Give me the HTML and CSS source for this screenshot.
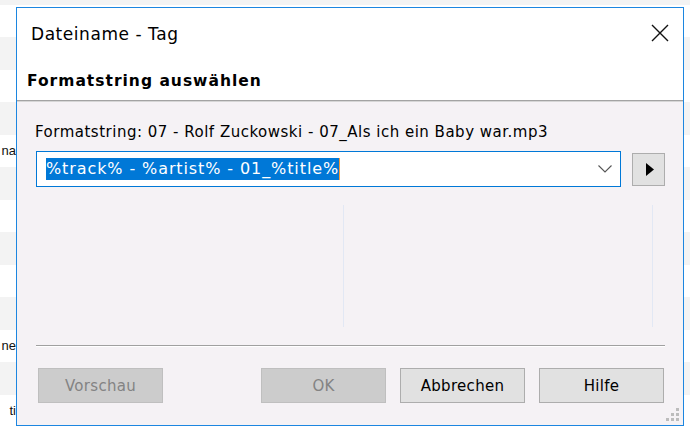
FILE: index.html
```html
<!DOCTYPE html>
<html lang="de">
<head>
    <meta charset="UTF-8">
    <meta name="viewport" content="width=device-width, initial-scale=1.0">
    <title>Dateiname - Tag</title>
    <link rel="stylesheet" href="styles.css">
</head>
<body>
    <!-- list of the main window, mostly hidden behind the dialog -->
    <div class="backdrop">
        <div class="row gray"></div>
        <div class="row"></div>
        <div class="row gray"></div>
        <div class="row"></div>
        <div class="row gray"></div>
        <div class="row"><span class="cell">na</span></div>
        <div class="row gray"></div>
        <div class="row"></div>
        <div class="row gray"></div>
        <div class="row"></div>
        <div class="row gray"></div>
        <div class="row"><span class="cell">ne</span></div>
        <div class="row gray"></div>
        <div class="row"><span class="cell">ti</span></div>
    </div>

    <div class="dialog">
        <div class="titlebar">
            <span class="title">Dateiname - Tag</span>
            <svg class="close" width="18" height="18" viewBox="0 0 18 18">
                <path d="M1 1 L17 17 M17 1 L1 17" stroke="#111" stroke-width="1.4" fill="none"/>
            </svg>
        </div>
        <div class="header">Formatstring auswählen</div>

        <div class="content">
            <div class="label">Formatstring: 07 - Rolf Zuckowski - 07_Als ich ein Baby war.mp3</div>

            <div class="combo-row">
                <div class="combo">
                    <span class="selection">%track% - %artist% - 01_%title%</span>
                    <span class="caret"></span>
                    <svg class="chevron" width="14" height="8" viewBox="0 0 14 8">
                        <path d="M0.5 0.5 L7 7 L13.5 0.5" stroke="#555" stroke-width="1.1" fill="none"/>
                    </svg>
                </div>
                <button class="arrow-btn">
                    <svg width="8" height="13" viewBox="0 0 8 13">
                        <path d="M0 0 L8 6.5 L0 13 Z" fill="#000"/>
                    </svg>
                </button>
            </div>

            <div class="preview">
                <div class="preview-box"></div>
            </div>

            <div class="separator"></div>

            <div class="buttons">
                <button class="btn first" disabled>Vorschau</button>
                <div class="btn-group">
                    <button class="btn" disabled>OK</button>
                    <button class="btn">Abbrechen</button>
                    <button class="btn">Hilfe</button>
                </div>
            </div>
        </div>

        <svg class="grip" width="14" height="14" viewBox="0 0 14 14">
            <rect x="10" y="0" width="3" height="3" fill="#bcbcbc"/>
            <rect x="5" y="5" width="3" height="3" fill="#bcbcbc"/>
            <rect x="10" y="5" width="3" height="3" fill="#bcbcbc"/>
            <rect x="0" y="10" width="3" height="3" fill="#bcbcbc"/>
            <rect x="5" y="10" width="3" height="3" fill="#bcbcbc"/>
            <rect x="10" y="10" width="3" height="3" fill="#bcbcbc"/>
        </svg>
    </div>
</body>
</html>
```

FILE: styles.css
```css
body {
    margin: 0;
    width: 690px;
    height: 429px;
    overflow: hidden;
    position: relative;
    background-color: #fff;
    font-family: "DejaVu Sans", "Noto Sans", sans-serif;
    font-size: 15px;
    color: #000;
}

.backdrop {
    margin-top: -28px;
}

.row {
    height: 32.5px;
    width: 16px;
    display: flex;
    align-items: center;
    justify-content: flex-end;
    white-space: nowrap;
    font-family: "Liberation Sans", sans-serif;
    font-size: 13px;
    color: #111;
}

.row.gray {
    background-color: #f3f3f3;
    width: 100%;
}

.dialog {
    position: absolute;
    left: 16px;
    top: 7px;
    width: 666px;
    height: 417px;
    border: 1px solid #1c86e0;
    background-color: #f5f2f5;
    display: flex;
    flex-direction: column;
}

.titlebar {
    height: 52px;
    background-color: #fff;
    display: flex;
    align-items: center;
    justify-content: space-between;
    padding: 0 14px 0 14px;
}

.title {
    font-size: 17px;
    letter-spacing: 0.55px;
}

.close {
    margin-top: -2px;
}

.header {
    background-color: #fff;
    font-weight: bold;
    font-size: 15.5px;
    letter-spacing: 1px;
    line-height: 20px;
    padding: 11px 10px 9px 10px;
    border-bottom: 1px solid #a3a3a3;
    box-shadow: 0 1px 0 #d6d6d6;
}

.content {
    flex: 1;
    padding: 21px 18px 0 19px;
    display: flex;
    flex-direction: column;
}

.label {
    line-height: 20px;
    margin-left: -1px;
    letter-spacing: 0.5px;
    white-space: nowrap;
}

.combo-row {
    display: flex;
    align-items: center;
    gap: 11px;
    margin-top: 9px;
}

.combo {
    flex: 1;
    height: 34px;
    border: 1px solid #0078d7;
    background-color: #fff;
    display: flex;
    align-items: center;
    padding: 0 8px 0 9px;
}

.selection {
    background-color: #0078d7;
    color: #fff;
    font-size: 16px;
    letter-spacing: 0.9px;
    line-height: 22px;
    white-space: nowrap;
}

.caret {
    width: 1px;
    height: 22px;
    background-color: #f59a3a;
}

.chevron {
    margin-left: auto;
}

.arrow-btn {
    width: 33px;
    height: 33px;
    border: 1px solid #adadad;
    background-color: #e1e1e1;
    padding: 0 0 0 2px;
    display: flex;
    align-items: center;
    justify-content: center;
}

.preview {
    margin-top: 18px;
    height: 122px;
    display: flex;
}

.preview-box {
    margin-left: 307px;
    width: 308px;
    border-left: 1px solid #e2e8f4;
    border-right: 1px solid #e2e8f4;
}

.separator {
    margin-top: 18px;
    height: 1px;
    background-color: #a0a0a0;
    border-bottom: 1px solid #fff;
}

.buttons {
    margin-top: 21px;
    display: flex;
    justify-content: space-between;
}

.btn-group {
    display: flex;
    gap: 14px;
    margin-right: 1px;
}

.btn {
    width: 125px;
    height: 35px;
    border: 1px solid #adadad;
    background-color: #e1e1e1;
    font-family: inherit;
    font-size: 15px;
    letter-spacing: 0.3px;
    color: #000;
    padding: 0;
}

.btn:disabled {
    border-color: #bfbfbf;
    background-color: #cccccc;
    color: #838383;
}

.btn.first {
    margin-left: 2px;
}

.grip {
    position: absolute;
    right: 3px;
    bottom: 3px;
}
```
